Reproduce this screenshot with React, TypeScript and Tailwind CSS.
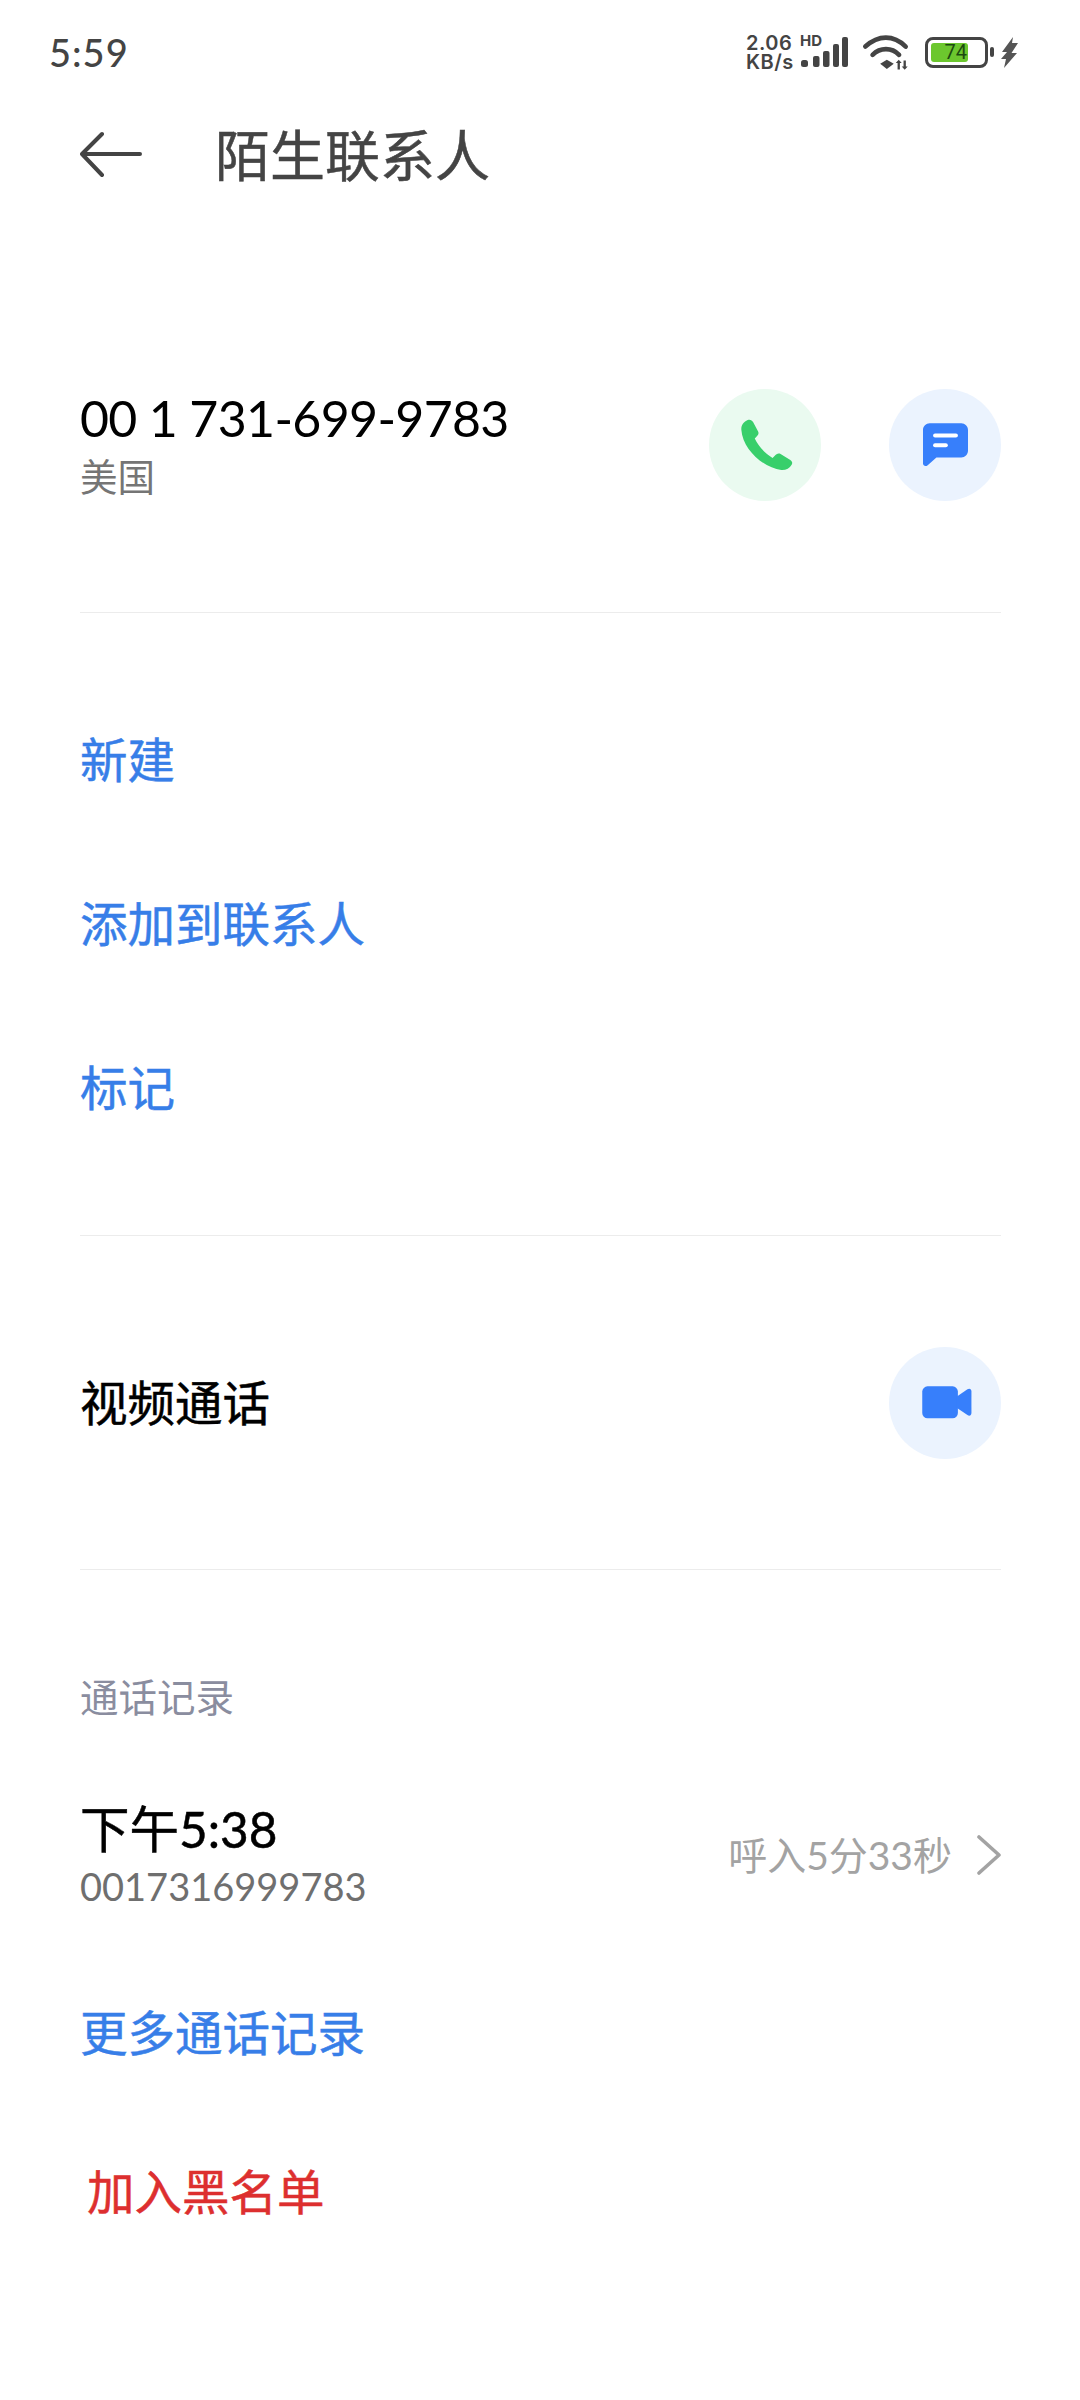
const cjk = "font-['Lato','Noto_Sans_CJK_SC',sans-serif]";
const firm = "[-webkit-text-stroke:0.5px_currentColor]";

function Signal() {
  return (
    <div className="relative w-[47px] h-[30px]">
      <svg width="47" height="30" viewBox="0 0 47 30" className="block">
        <rect x="0" y="23" width="7" height="7" rx="2.5" fill="#444" />
        <rect x="12" y="19" width="6.5" height="11" rx="2" fill="#444" />
        <rect x="22" y="14" width="6.5" height="16" rx="2" fill="#444" />
        <rect x="32" y="7" width="6" height="23" rx="2" fill="#444" />
        <rect x="41" y="0" width="6" height="30" rx="2" fill="#444" />
      </svg>
      <span className="absolute left-[-1px] top-[-3px] text-[15px] leading-[14px] font-bold text-[#444] font-['Inter',sans-serif]">HD</span>
    </div>
  );
}

function Wifi() {
  return (
    <svg width="47" height="35" viewBox="430 44 142 104" fill="none" className="block">
      <path d="M440 78 C480 42 525 42 562 78" stroke="#444" strokeWidth="14" strokeLinecap="round" />
      <path d="M462 103 C485 80 520 80 542 103" stroke="#444" strokeWidth="14" strokeLinecap="round" />
      <path d="M485 130 L505 118 L526 130 L505 146 Z" fill="#444" />
      <path d="M541 124 V147 M559 120 V143" stroke="#444" strokeWidth="7" />
      <path d="M532 128 L541 118 L550 128 Z M550 138 L559 148 L568 138 Z" fill="#444" />
    </svg>
  );
}

function Bolt() {
  return (
    <svg width="17" height="31" viewBox="0 0 17 31" className="block">
      <path d="M12 0 L1 15 H6 L0 22 H5 L3 31 L16 16 H10.5 L17 6 H11 Z" fill="#555" />
    </svg>
  );
}

function StatusBar() {
  return (
    <div className="h-[104px] flex items-center justify-between pl-[49px] pr-[62px]">
      <span className="text-[38px] leading-[40px] text-[#444] font-['Lato',sans-serif] font-medium tracking-[1px]">5:59</span>
      <div className="flex items-center">
        <div className="w-[48px] pl-[1px] text-[#444] font-['Inter',sans-serif] font-semibold text-[20px] leading-[19px] tracking-[0.5px] mt-[1px] whitespace-nowrap">
          2.06
          <br />
          KB/s
        </div>
        <div className="ml-[8px]"><Signal /></div>
        <div className="ml-[14px]"><Wifi /></div>
        <div className="ml-[16px] w-[63px] h-[31px] rounded-[8px] border-[3px] border-[#444] p-[3px] flex">
          <div className="w-[37px] h-full bg-[#6cc72e] rounded-[3px] flex items-center justify-end">
            <span className="text-[20px] leading-none text-[#1c4a10] font-['Roboto',sans-serif] mr-[1px]">74</span>
          </div>
        </div>
        <div className="ml-[2px] w-[4px] h-[10px] bg-[#444] rounded-[2px]" />
        <div className="ml-[7px]"><Bolt /></div>
      </div>
    </div>
  );
}

function Header() {
  return (
    <div className="h-[102px] flex items-center pl-[80px]">
      <svg width="62" height="48" viewBox="0 0 62 48" fill="none" className="block">
        <path d="M22 3 L2 23 L22 44 M3 23 H60" stroke="#444" strokeWidth="4" strokeLinecap="round" strokeLinejoin="round" />
      </svg>
      <span className={`ml-[73px] text-[55px] leading-[64px] text-[#444] ${firm} ${cjk}`}>陌生联系人</span>
    </div>
  );
}

function Circle({ tint, children }: { tint: string; children: React.ReactNode }) {
  return <div className={`w-[112px] h-[112px] rounded-full flex items-center justify-center ${tint}`}>{children}</div>;
}

function PhoneIcon() {
  return (
    <svg width="52" height="52" viewBox="185 148 155 155" className="block ml-[4px]">
      <path
        d="M205 151 C212 148 218 152 221 157 L236 185 C239 191 236 196 231 201 L226 206 C236 228 256 250 279 264 L285 258 C290 252 296 249 303 252 L332 270 C338 274 339 279 336 284 C330 295 318 301 305 300 C255 295 190 240 186 180 C185 167 193 156 205 151 Z"
        fill="#38cf6b"
      />
    </svg>
  );
}

function MessageIcon() {
  return (
    <svg width="45" height="44" viewBox="728 162 134 130" className="block">
      <path
        d="M748 162 H842 C853 162 862 171 862 182 V244 C862 255 853 264 842 264 H768 L742 287 C736 292 728 289 728 282 V182 C728 171 737 162 748 162 Z"
        fill="#377ffb"
      />
      <rect x="758" y="193" width="74" height="12" rx="6" fill="#fff" />
      <rect x="758" y="222" width="44" height="12" rx="6" fill="#fff" />
    </svg>
  );
}

function VideoIcon() {
  return (
    <svg width="50" height="33" viewBox="187 170 150 100" className="block ml-[4px]">
      <rect x="187" y="171" width="108" height="97" rx="16" fill="#377ffb" />
      <path d="M290 203 L324 180 C330 176 336 179 336 186 V252 C336 259 330 262 324 258 L290 235 Z" fill="#377ffb" />
    </svg>
  );
}

function Divider() {
  return <div className="h-px bg-[#ececec] mx-[80px] mr-[79px]" />;
}

function ActionRow({ label, color = "text-[#377ee8]", inset = "" }: { label: string; color?: string; inset?: string }) {
  return (
    <div className={`h-[164px] flex items-center pl-[80px] ${inset}`}>
      <span className={`text-[47.5px] leading-[60px] ${firm} ${color} ${cjk}`}>{label}</span>
    </div>
  );
}

export default function App() {
  return (
    <div className="w-[1080px] h-[2400px] bg-white flex flex-col overflow-hidden">
      <StatusBar />
      <Header />

      <div className="h-[406px] pt-[131px]">
        <div className="h-[216px] flex items-center justify-between pl-[80px] pr-[79px]">
          <div className="flex flex-col">
            <span className={`text-[50px] leading-[60px] tracking-[-0.65px] text-black ${cjk}`}>00 1 731-699-9783</span>
            <span className={`text-[37.5px] leading-[50px] text-[#757575] mt-[4px] ${cjk}`}>美国</span>
          </div>
          <div className="flex gap-[68px]">
            <Circle tint="bg-[#eafaf0]"><PhoneIcon /></Circle>
            <Circle tint="bg-[#ebf3fe]"><MessageIcon /></Circle>
          </div>
        </div>
      </div>
      <Divider />

      <div className="py-[65px]">
        <ActionRow label="新建" />
        <ActionRow label="添加到联系人" />
        <ActionRow label="标记" />
      </div>
      <Divider />

      <div className="h-[333px] flex items-center justify-between pl-[80px] pr-[79px]">
        <span className={`text-[47.5px] leading-[60px] ${firm} text-black ${cjk}`}>视频通话</span>
        <Circle tint="bg-[#ebf3fe]"><VideoIcon /></Circle>
      </div>
      <Divider />

      <div className="pt-[103px] pl-[80px]">
        <span className={`block text-[38.5px] leading-[48px] text-[#8a8d9f] ${cjk}`}>通话记录</span>
      </div>

      <div className="mt-[59px] h-[150px] flex items-center justify-between pl-[80px] pr-[78px]">
        <div className="flex flex-col">
          <span className={`text-[49.5px] leading-[60px] ${firm} text-black ${cjk}`}>下午5:38</span>
          <span className={`text-[38px] leading-[50px] text-[#6f6f6f] mt-[2px] ${cjk}`}>0017316999783</span>
        </div>
        <div className="flex items-center">
          <span className={`text-[39px] leading-[50px] text-[#a3a3a3] ${cjk}`}>呼入5分33秒</span>
          <svg width="26" height="40" viewBox="0 0 26 40" fill="none" className="block ml-[24px]">
            <path d="M3 2 L23 20 L3 38" stroke="#a3a3a3" strokeWidth="3.6" strokeLinecap="round" strokeLinejoin="round" />
          </svg>
        </div>
      </div>

      <div className="mt-[21px]">
        <ActionRow label="更多通话记录" />
        <ActionRow label="加入黑名单" color="text-[#dd2f2f]" inset="pl-[87px] mt-[-5px]" />
      </div>
    </div>
  );
}
